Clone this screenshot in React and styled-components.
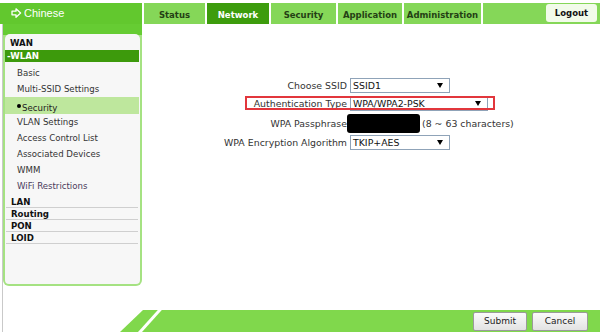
import React from 'react'
import styled, { createGlobalStyle } from 'styled-components'

const GlobalStyle = createGlobalStyle`
  html, body {
    margin: 0;
    padding: 0;
    background: #fff;
  }
  body {
    font-family: 'DejaVu Sans', Verdana, sans-serif;
  }
`

const tabs = [
  { name: 'Status', width: 61 },
  { name: 'Network', width: 62, active: true },
  { name: 'Security', width: 65 },
  { name: 'Application', width: 64 },
  { name: 'Administration', width: 77 }
]

const subItems = [
  'Basic',
  'Multi-SSID Settings',
  'Security',
  'VLAN Settings',
  'Access Control List',
  'Associated Devices',
  'WMM',
  'WiFi Restrictions'
]

const App = () => {
  return (
    <Page>
      <GlobalStyle />
      <Header>
        <Brand>
          <svg width='11' height='10' viewBox='0 0 11 10'>
            <path
              d='M1 3.2 H5 V0.8 L9.6 5 L5 9.2 V6.8 H1 Z'
              fill='none'
              stroke='#fff'
              strokeWidth='1.3'
              strokeLinejoin='round'
            />
          </svg>
          Chinese
        </Brand>
        {tabs.map(t => (
          <Tab key={t.name} width={t.width} active={t.active}>
            {t.name}
          </Tab>
        ))}
        <TabFill>
          <LogoutButton>Logout</LogoutButton>
        </TabFill>
      </Header>

      <Frame>
        <Body>
          <Sidebar>
            <Panel>
              <Group>WAN</Group>
              <OpenGroup>-WLAN</OpenGroup>
              <SubList>
                {subItems.map(item =>
                  item === 'Security' ? (
                    <ActiveItem key={item}>
                      <Dot />
                      {item}
                    </ActiveItem>
                  ) : (
                    <SubItem key={item} visited={item === 'WiFi Restrictions'}>
                      {item}
                    </SubItem>
                  )
                )}
              </SubList>
              <GroupList>
                <Group divided>LAN</Group>
                <Group divided>Routing</Group>
                <Group divided>PON</Group>
                <Group divided>LOID</Group>
              </GroupList>
            </Panel>
          </Sidebar>

          <Content>
            <Form>
              <Row height={17}>
                <Label>Choose SSID</Label>
                <Control>
                  <Select width={100}>SSID1</Select>
                </Control>
              </Row>
              <Row height={18} highlighted>
                <Label>Authentication Type</Label>
                <Control>
                  <Select width={138}>WPA/WPA2-PSK</Select>
                </Control>
              </Row>
              <Row height={22}>
                <Label>WPA Passphrase</Label>
                <Control>
                  <Masked />
                  <Hint>(8 ~ 63 characters)</Hint>
                </Control>
              </Row>
              <Row height={17}>
                <Label>WPA Encryption Algorithm</Label>
                <Control>
                  <Select width={100}>TKIP+AES</Select>
                </Control>
              </Row>
            </Form>
          </Content>
        </Body>

        <Footer>
          <FooterButton width={54}>Submit</FooterButton>
          <FooterButton width={56}>Cancel</FooterButton>
        </Footer>
      </Frame>
    </Page>
  )
}

const Page = styled.div`
  width: 600px;
  height: 332px;
  overflow: hidden;
  display: flex;
  flex-direction: column;
  background: #fff;
`

const Header = styled.div`
  display: flex;
  gap: 2px;
  padding-top: 3px;
  height: 21px;
  flex-shrink: 0;
`

const Brand = styled.div`
  width: 142px;
  box-sizing: border-box;
  padding-left: 11px;
  display: flex;
  align-items: center;
  gap: 2px;
  background: #62c82e;
  color: #fff;
  font-family: 'Liberation Sans', Arial, sans-serif;
  font-size: 11px;
  padding-bottom: 2px;
`

const Tab = styled.div`
  width: ${p => p.width}px;
  display: flex;
  justify-content: center;
  align-items: center;
  padding-top: 3px;
  box-sizing: border-box;
  background: ${p => (p.active ? '#3d9c0d' : '#85d758')};
  color: ${p => (p.active ? '#fff' : '#243f14')};
  font-size: 8.5px;
  font-weight: bold;
`

const TabFill = styled.div`
  flex: 1;
  display: flex;
  justify-content: flex-end;
  align-items: flex-start;
  padding: 1px 3px 0 0;
  background: #85d758;
`

const LogoutButton = styled.div`
  width: 51px;
  height: 18px;
  box-sizing: border-box;
  display: flex;
  align-items: center;
  justify-content: center;
  padding-bottom: 1px;
  background: #f2fbea;
  border-radius: 3px;
  font-size: 8.5px;
  font-weight: bold;
  color: #111;
`

const Frame = styled.div`
  flex: 1;
  display: flex;
  flex-direction: column;
  margin-left: 2px;
  border-left: 1px solid #c9c9c9;
`

const Body = styled.div`
  display: flex;
  height: 286px;
`

const Sidebar = styled.div`
  width: 139px;
  height: 262px;
  flex-shrink: 0;
  box-sizing: border-box;
  padding: 10px 2px 2px;
  background: linear-gradient(#66cc33 0, #66cc33 11px, #a5e282 11px);
  border-radius: 0 0 6px 6px;
`

const Panel = styled.div`
  height: 100%;
  box-sizing: border-box;
  padding: 3px 1px 0 0;
  background: #f7f7f7;
  border-radius: 5px 5px 4px 4px;
  font-size: 8.6px;
`

const Group = styled.div`
  height: ${p => (p.divided ? 11 : 13)}px;
  line-height: 12px;
  padding-left: 5px;
  margin: 0 ${p => (p.divided ? '1px' : '0')};
  font-weight: bold;
  color: #111;
  border-bottom: ${p => (p.divided ? '1px solid #cfcfcf' : 'none')};
`

const OpenGroup = styled.div`
  height: 12px;
  line-height: 12px;
  padding-left: 2px;
  background: #3d9a0c;
  color: #fff;
  font-weight: bold;
`

const SubList = styled.div`
  margin-top: 3px;
  display: flex;
  flex-direction: column;
`

const SubItem = styled.div`
  height: 16px;
  line-height: 16px;
  padding-left: 12px;
  color: ${p => (p.visited ? '#4a3b5c' : '#333')};
`

const ActiveItem = styled.div`
  height: 17px;
  box-sizing: border-box;
  padding: 5px 0 0 12px;
  line-height: 12px;
  background: #bee79d;
  color: #222;
  display: flex;
  align-items: center;
`

const Dot = styled.span`
  width: 4px;
  height: 4px;
  border-radius: 50%;
  background: #000;
  margin: 0 1px 5px 0;
`

const GroupList = styled.div`
  margin-top: 2px;
`

const Content = styled.div`
  flex: 1;
  padding-top: 53px;
`

const Form = styled.div`
  margin-left: 57px;
  display: flex;
  flex-direction: column;
  font-size: 9.4px;
  color: #333;
`

const Row = styled.div`
  position: relative;
  display: grid;
  grid-template-columns: 148px auto;
  align-items: center;
  height: ${p => p.height}px;

  &::after {
    content: '';
    display: ${p => (p.highlighted ? 'block' : 'none')};
    position: absolute;
    z-index: 1;
    left: 46px;
    top: 2px;
    width: 250px;
    height: 14px;
    box-sizing: border-box;
    border: 2px solid #e2363c;
    pointer-events: none;
  }
`

const Label = styled.div`
  text-align: right;
  white-space: nowrap;
`

const Control = styled.div`
  display: flex;
  align-items: center;
`

const Select = styled.div`
  position: relative;
  width: ${p => p.width}px;
  height: 15px;
  margin-left: 3px;
  box-sizing: border-box;
  padding-left: 2px;
  line-height: 13px;
  background: #fff;
  border: 1px solid #8fa3b8;
  color: #111;

  &::after {
    content: '';
    position: absolute;
    right: 6px;
    top: 4px;
    border-left: 3px solid transparent;
    border-right: 3px solid transparent;
    border-top: 5px solid #000;
  }
`

const Masked = styled.div`
  width: 73px;
  height: 19px;
  background: #000;
  border-radius: 3px;
`

const Hint = styled.span`
  margin-left: 2px;
  white-space: nowrap;
`

const Footer = styled.div`
  position: relative;
  height: 22px;
  margin-left: 117px;
  display: flex;
  justify-content: flex-end;
  align-items: center;
  gap: 5px;
  padding-right: 12px;
  background: #80d84c;
  clip-path: polygon(23px 0, 100% 0, 100% 100%, 0 100%);

  &::before {
    content: '';
    position: absolute;
    left: 18px;
    bottom: 0;
    width: 4px;
    height: 22px;
    background: #fff;
    transform: skewX(-42deg);
    transform-origin: bottom left;
  }
`

const FooterButton = styled.div`
  width: ${p => p.width}px;
  height: 19px;
  box-sizing: border-box;
  display: flex;
  align-items: center;
  justify-content: center;
  background: linear-gradient(#fbfbfb, #e2e2e2);
  border: 1px solid #9a9a9a;
  border-radius: 2px;
  font-size: 9px;
  color: #222;
`

export default App
